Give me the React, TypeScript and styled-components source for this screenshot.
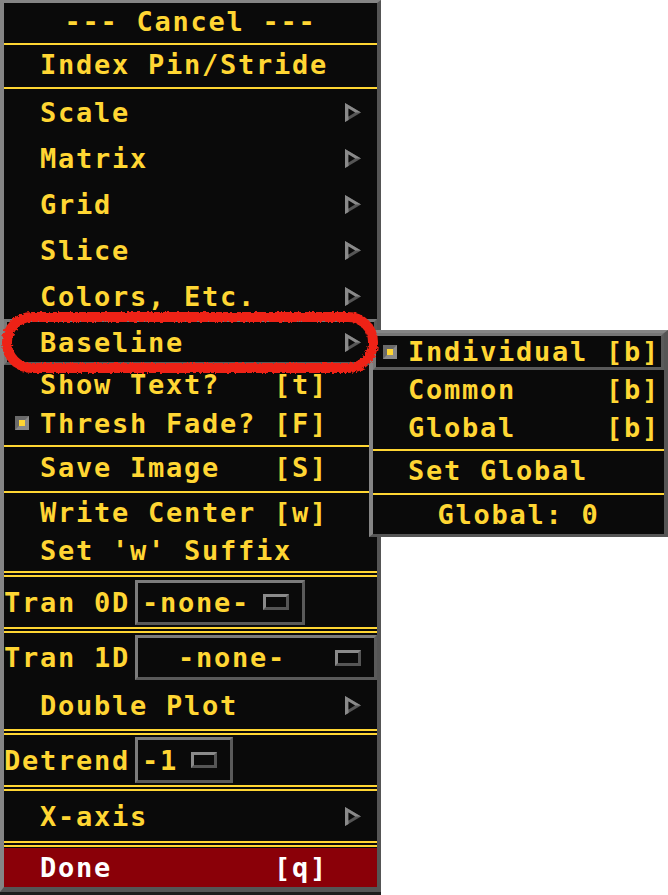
import React from 'react';
import styled, { createGlobalStyle, css } from 'styled-components';

const YELLOW = '#ffd633';
const BG = '#0a0a0a';
const LIGHT = '#858585';
const DARK = '#555555';

const GlobalStyle = createGlobalStyle`
  html, body { margin: 0; padding: 0; background: #ffffff; }
  body { font-family: "DejaVu Sans Mono", "Liberation Mono", monospace; }
`;

const textStyle = css`
  font-family: "DejaVu Sans Mono", "Liberation Mono", monospace;
  font-weight: bold;
  font-size: 27px;
  letter-spacing: 1.75px;
  line-height: 27px;
  white-space: pre;
`;

const Stage = styled.div`
  position: relative;
  width: 668px;
  height: 895px;
  overflow: hidden;
`;

const Menu = styled.div`
  width: 373px;
  background: ${BG};
  border-style: solid;
  border-width: 3px 4px 5px 4px;
  border-color: ${LIGHT} ${DARK} ${DARK} ${LIGHT};
  box-shadow: 0 3px 0 #1c1c1c;
  display: flex;
  flex-direction: column;
`;

const SubMenu = styled.div`
  position: absolute;
  left: 369px;
  top: 330px;
  width: 291px;
  background: ${BG};
  border-style: solid;
  border-width: 3px 4px 3px 4px;
  border-color: ${LIGHT} ${DARK} ${DARK} ${LIGHT};
  display: flex;
  flex-direction: column;
  z-index: 2;
`;

const Item = styled.div<{ $h: number; $pl?: number; $armed?: boolean; $done?: boolean }>`
  ${textStyle};
  box-sizing: border-box;
  height: ${p => p.$h}px;
  display: flex;
  align-items: center;
  padding-left: ${p => (p.$pl ?? 11) - (p.$armed ? 3 : 0)}px;
  padding-right: ${p => (p.$armed ? 13 : 16)}px;
  color: ${p => (p.$done ? '#ffffff' : YELLOW)};
  background: ${p => (p.$done ? '#8a0008' : BG)};
  ${p =>
    p.$armed &&
    css`
      border: 3px solid;
      border-color: #777777 #5a5a5a #5a5a5a #777777;
    `}
`;

const Centered = styled.div<{ $h: number }>`
  ${textStyle};
  height: ${p => p.$h}px;
  display: flex;
  align-items: center;
  justify-content: center;
  color: ${YELLOW};
`;

const Slot = styled.span`
  flex: 0 0 14px;
  height: 14px;
  margin-right: 11px;
  display: flex;
  align-items: center;
  justify-content: center;
`;

const ToggleMark = styled.span`
  box-sizing: border-box;
  width: 14px;
  height: 14px;
  border: 4px solid;
  border-color: #6a6a6a #8a8a8a #8a8a8a #6a6a6a;
  background: ${YELLOW};
`;

const Label = styled.span<{ $w?: number }>`
  ${p => (p.$w ? `flex: 0 0 ${p.$w}px;` : '')}
`;

const Accel = styled.span``;

const Sep = styled.div<{ $mt: number }>`
  height: 2px;
  margin-top: ${p => p.$mt}px;
  background: ${YELLOW};
`;

const DoubleSep = styled.div<{ $mt?: number; $mb?: number }>`
  box-sizing: border-box;
  height: 6px;
  margin-top: ${p => p.$mt ?? 0}px;
  margin-bottom: ${p => p.$mb ?? 0}px;
  border-top: 2px solid ${YELLOW};
  border-bottom: 2px solid ${YELLOW};
`;

const OptionRow = styled.div<{ $h: number }>`
  ${textStyle};
  height: ${p => p.$h}px;
  display: flex;
  align-items: center;
  color: ${YELLOW};
`;

const OptionLabel = styled.span`
  flex: 0 0 131px;
`;

const OptionBox = styled.div<{ $h: number; $wide?: boolean }>`
  box-sizing: border-box;
  height: ${p => p.$h}px;
  ${p => (p.$wide ? 'flex: 1 1 auto;' : 'flex: 0 0 auto;')}
  display: flex;
  align-items: center;
  padding: 0 13px 0 4px;
  border: 3px solid;
  border-color: #7c7c7c #5a5a5a #5a5a5a #7c7c7c;
`;

const OptionValue = styled.span<{ $wide?: boolean }>`
  ${p => (p.$wide ? 'flex: 1 1 auto; text-align: center;' : '')}
`;

const OptionMark = styled.span`
  box-sizing: border-box;
  flex: 0 0 26px;
  height: 16px;
  margin-left: 13px;
  border: 3px solid;
  border-color: #8a8a8a #555555 #555555 #8a8a8a;
  background: ${BG};
`;

const ArrowWrap = styled.span`
  margin-left: auto;
  display: flex;
`;

const Annotation = styled.svg`
  position: absolute;
  left: 0;
  top: 304px;
  z-index: 3;
  pointer-events: none;
`;

const Arrow = () => (
  <ArrowWrap>
    <svg width="16" height="19" viewBox="0 0 16 19">
      <polygon points="0,0 16,9.5 0,19" fill="#555555" />
      <polygon points="0,0 16,9.5 10,9.5 3.5,5.5 3.5,17 0,19" fill="#8a8a8a" />
      <polygon points="3.5,5.5 10,9.5 3.5,13.5" fill={BG} />
    </svg>
  </ArrowWrap>
);

const cascades = ['Scale', 'Matrix', 'Grid', 'Slice', 'Colors, Etc.'];

export default function App() {
  return (
    <Stage>
      <GlobalStyle />
      <Menu>
        <Centered $h={37}>--- Cancel ---</Centered>
        <Sep $mt={3} />
        <Item $h={39}>
          <Slot />
          <Label>Index Pin/Stride</Label>
        </Item>
        <Sep $mt={3} />
        {cascades.map(c => (
          <Item key={c} $h={46}>
            <Slot />
            <Label>{c}</Label>
            <Arrow />
          </Item>
        ))}
        <Item $h={46} $armed>
          <Slot />
          <Label>Baseline</Label>
          <Arrow />
        </Item>
        <Item $h={39}>
          <Slot />
          <Label $w={234}>Show Text?</Label>
          <Accel>[t]</Accel>
        </Item>
        <Item $h={38}>
          <Slot>
            <ToggleMark />
          </Slot>
          <Label $w={234}>Thresh Fade?</Label>
          <Accel>[F]</Accel>
        </Item>
        <Sep $mt={3} />
        <Item $h={41}>
          <Slot />
          <Label $w={234}>Save Image</Label>
          <Accel>[S]</Accel>
        </Item>
        <Sep $mt={3} />
        <Item $h={38}>
          <Slot />
          <Label $w={234}>Write Center</Label>
          <Accel>[w]</Accel>
        </Item>
        <Item $h={38}>
          <Slot />
          <Label>Set 'w' Suffix</Label>
        </Item>
        <DoubleSep $mt={2} />
        <OptionRow $h={50}>
          <OptionLabel>Tran 0D</OptionLabel>
          <OptionBox $h={45}>
            <OptionValue>-none-</OptionValue>
            <OptionMark />
          </OptionBox>
        </OptionRow>
        <DoubleSep />
        <OptionRow $h={49}>
          <OptionLabel>Tran 1D</OptionLabel>
          <OptionBox $h={45} $wide>
            <OptionValue $wide>-none-</OptionValue>
            <OptionMark />
          </OptionBox>
        </OptionRow>
        <Item $h={47}>
          <Slot />
          <Label>Double Plot</Label>
          <Arrow />
        </Item>
        <DoubleSep />
        <OptionRow $h={50}>
          <OptionLabel>Detrend</OptionLabel>
          <OptionBox $h={46}>
            <OptionValue>-1</OptionValue>
            <OptionMark />
          </OptionBox>
        </OptionRow>
        <DoubleSep />
        <Item $h={50}>
          <Slot />
          <Label>X-axis</Label>
          <Arrow />
        </Item>
        <DoubleSep $mb={1} />
        <Item $h={39} $done>
          <Slot />
          <Label $w={234}>Done</Label>
          <Accel>[q]</Accel>
        </Item>
      </Menu>

      <SubMenu>
        <Item $h={37} $pl={10} $armed>
          <Slot>
            <ToggleMark />
          </Slot>
          <Label $w={198}>Individual</Label>
          <Accel>[b]</Accel>
        </Item>
        <Item $h={39} $pl={10}>
          <Slot />
          <Label $w={198}>Common</Label>
          <Accel>[b]</Accel>
        </Item>
        <Item $h={37} $pl={10}>
          <Slot />
          <Label $w={198}>Global</Label>
          <Accel>[b]</Accel>
        </Item>
        <Sep $mt={3} />
        <Item $h={39} $pl={10}>
          <Slot />
          <Label>Set Global</Label>
        </Item>
        <Sep $mt={3} />
        <Centered $h={39}>Global: 0</Centered>
      </SubMenu>

      <Annotation width="386" height="76" viewBox="0 0 386 76">
        <defs>
          <filter id="rough" x="-5%" y="-20%" width="110%" height="140%">
            <feTurbulence type="fractalNoise" baseFrequency="0.4" numOctaves="2" seed="3" />
            <feDisplacementMap in="SourceGraphic" scale="4" />
          </filter>
        </defs>
        <rect
          x="7"
          y="13"
          width="366"
          height="51"
          rx="25"
          ry="25"
          fill="none"
          stroke="#ee2415"
          strokeWidth="10"
          filter="url(#rough)"
        />
      </Annotation>
    </Stage>
  );
}
